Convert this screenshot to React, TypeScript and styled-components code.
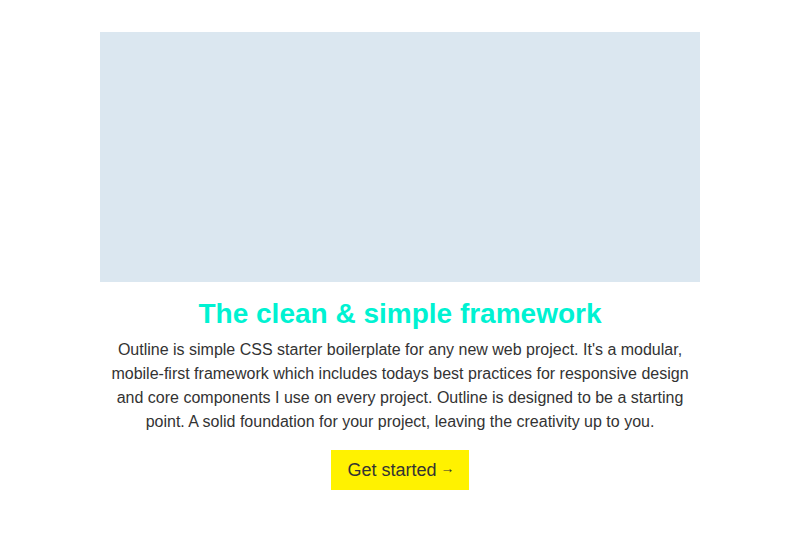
import React from "react";
import styled, { createGlobalStyle } from "styled-components";

const Global = createGlobalStyle`
  html, body { margin: 0; padding: 0; background: #fff; }
  body { font-family: "Liberation Sans", Arial, sans-serif; color: #333; }
`;

const Page = styled.main`
  width: 600px;
  margin: 32px auto 0;
  display: flex;
  flex-direction: column;
  align-items: center;
  text-align: center;
`;

const Hero = styled.div`
  width: 600px;
  height: 250px;
  background: #dbe7f0;
`;

const Title = styled.h1`
  margin: 15px 0 7px;
  font-size: 28px;
  line-height: 34px;
  font-weight: 700;
  color: #00f2d2;
`;

const Text = styled.p`
  margin: 0;
  width: 590px;
  font-size: 16px;
  line-height: 24px;
  color: #333;
`;

const Button = styled.a`
  margin-top: 16px;
  display: inline-flex;
  align-items: center;
  justify-content: center;
  gap: 4px;
  height: 40px;
  padding: 0 14px 0 16px;
  background: #fff200;
  color: #333;
  font-size: 18px;
  text-decoration: none;
`;

const Arrow = styled.span`
  font-size: 14px;
  line-height: 1;
  position: relative;
  top: -2px;
`;

export default function App() {
  return (
    <>
      <Global />
      <Page>
        <Hero />
        <Title>The clean &amp; simple framework</Title>
        <Text>
          Outline is simple CSS starter boilerplate for any new web project. It's a modular,
          mobile-first framework which includes todays best practices for responsive design
          and core components I use on every project. Outline is designed to be a starting
          point. A solid foundation for your project, leaving the creativity up to you.
        </Text>
        <Button href="#">
          Get started<Arrow>→</Arrow>
        </Button>
      </Page>
    </>
  );
}
